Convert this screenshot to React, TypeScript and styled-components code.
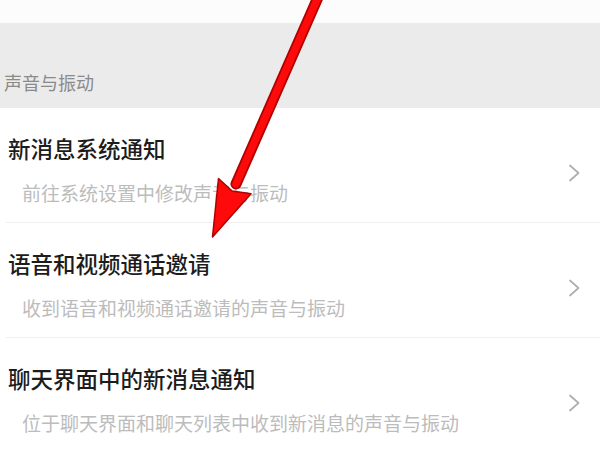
import styled, { createGlobalStyle } from 'styled-components';

const GlobalStyle = createGlobalStyle`
  html, body {
    margin: 0;
    padding: 0;
    background: #ffffff;
  }
  body {
    font-family: "Noto Sans CJK SC", "Noto Sans", sans-serif;
    overflow: hidden;
  }
`;

// Page
const Page = styled.div`
  position: relative;
  width: 600px;
  height: 450px;
  overflow: hidden;
  background: #ffffff;
  display: flex;
  flex-direction: column;
`;

const TopSpacer = styled.div`
  height: 23px;
  flex-shrink: 0;
  background: #fcfcfc;
`;

const SectionHeader = styled.div`
  height: 85px;
  flex-shrink: 0;
  box-sizing: border-box;
  background: #ebebeb;
  display: flex;
  align-items: flex-end;
  padding: 0 0 13px 4px;
  font-size: 18px;
  line-height: 26px;
  color: #8a8a8a;
`;

const List = styled.div`
  display: flex;
  flex-direction: column;
`;

const Row = styled.div<{ $last?: boolean }>`
  height: 115px;
  flex-shrink: 0;
  box-sizing: border-box;
  margin-left: 6px;
  padding: 25px 20px 0 2px;
  display: flex;
  align-items: flex-start;
  justify-content: space-between;
  border-bottom: ${(p) => (p.$last ? 'none' : '1px solid #efefef')};
`;

const TextBlock = styled.div`
  display: flex;
  flex-direction: column;
  gap: 17px;
`;

const Title = styled.div`
  font-size: 22.5px;
  font-weight: 500;
  line-height: 30px;
  color: #1c1c1c;
  white-space: nowrap;
`;

const Subtitle = styled.div`
  font-size: 19px;
  line-height: 26px;
  color: #bcbcbc;
  padding-left: 14px;
  white-space: nowrap;
`;

const Chevron = styled.svg`
  width: 12px;
  height: 18px;
  margin-top: 31px;
  flex-shrink: 0;
`;

const ArrowLayer = styled.svg`
  position: absolute;
  left: 0;
  top: 0;
  width: 600px;
  height: 450px;
  pointer-events: none;
`;

type Item = { title: string; subtitle: string };

const items: Item[] = [
  { title: '新消息系统通知', subtitle: '前往系统设置中修改声音与振动' },
  { title: '语音和视频通话邀请', subtitle: '收到语音和视频通话邀请的声音与振动' },
  { title: '聊天界面中的新消息通知', subtitle: '位于聊天界面和聊天列表中收到新消息的声音与振动' },
];

const ChevronIcon = () => (
  <Chevron viewBox="0 0 12 18">
    <path d="M2 1.5 L10.5 9 L2 16.5" fill="none" stroke="#b0b0b0" strokeWidth="1.8" strokeLinecap="round" strokeLinejoin="round" />
  </Chevron>
);

const RedArrow = () => (
  <ArrowLayer viewBox="0 0 600 450">
    <line x1="330" y1="-30" x2="236" y2="184" stroke="#b00000" strokeWidth="11" strokeLinecap="round" />
    <line x1="330" y1="-30" x2="236" y2="184" stroke="#ff0a0a" strokeWidth="7.5" strokeLinecap="round" />
    <polygon
      points="212.5,237 218.5,178.5 232.1,191 251,193.8"
      fill="#ff0a0a"
      stroke="#b00000"
      strokeWidth="1.5"
      strokeLinejoin="round"
    />
  </ArrowLayer>
);

export default function App() {
  return (
    <>
      <GlobalStyle />
      <Page>
        <TopSpacer />
        <SectionHeader>声音与振动</SectionHeader>
        <List>
          {items.map((item, i) => (
            <Row key={item.title} $last={i === items.length - 1}>
              <TextBlock>
                <Title>{item.title}</Title>
                <Subtitle>{item.subtitle}</Subtitle>
              </TextBlock>
              <ChevronIcon />
            </Row>
          ))}
        </List>
        <RedArrow />
      </Page>
    </>
  );
}
